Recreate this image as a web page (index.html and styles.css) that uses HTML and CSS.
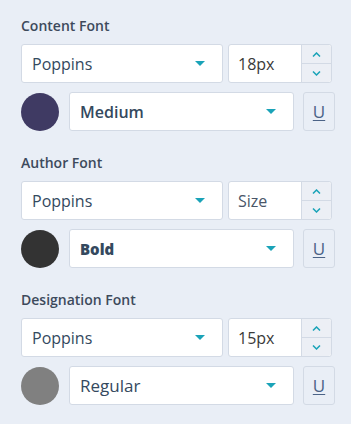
FILE: index.html
```html
<!DOCTYPE html>
<html>
<head>
  <title>Typography</title>
  <meta name="viewport" content="width=device-width, initial-scale=1.0">
  <link rel="stylesheet" href="styles.css">
</head>
<body>
  <div class="panel">
    <div class="font-group">
      <div class="group-label">Content Font</div>
      <div class="font-row">
        <div class="select family"><span>Poppins</span><i class="caret"></i></div>
        <div class="size-input">
          <span class="size-value">18px</span>
          <div class="spinner">
            <button class="spin up"><svg width="9" height="5" viewBox="0 0 9 5"><path d="M1 4.5 L4.5 1 L8 4.5" /></svg></button>
            <button class="spin down"><svg width="9" height="5" viewBox="0 0 9 5"><path d="M1 0.5 L4.5 4 L8 0.5" /></svg></button>
          </div>
        </div>
      </div>
      <div class="style-row">
        <span class="swatch" style="background-color: #3f3a63"></span>
        <div class="select weight medium"><span>Medium</span><i class="caret"></i></div>
        <button class="underline-btn">U</button>
      </div>
    </div>

    <div class="font-group">
      <div class="group-label">Author Font</div>
      <div class="font-row">
        <div class="select family"><span>Poppins</span><i class="caret"></i></div>
        <div class="size-input">
          <span class="size-value placeholder">Size</span>
          <div class="spinner">
            <button class="spin up"><svg width="9" height="5" viewBox="0 0 9 5"><path d="M1 4.5 L4.5 1 L8 4.5" /></svg></button>
            <button class="spin down"><svg width="9" height="5" viewBox="0 0 9 5"><path d="M1 0.5 L4.5 4 L8 0.5" /></svg></button>
          </div>
        </div>
      </div>
      <div class="style-row">
        <span class="swatch" style="background-color: #333333"></span>
        <div class="select weight bold"><span>Bold</span><i class="caret"></i></div>
        <button class="underline-btn">U</button>
      </div>
    </div>

    <div class="font-group">
      <div class="group-label">Designation Font</div>
      <div class="font-row">
        <div class="select family"><span>Poppins</span><i class="caret"></i></div>
        <div class="size-input">
          <span class="size-value">15px</span>
          <div class="spinner">
            <button class="spin up"><svg width="9" height="5" viewBox="0 0 9 5"><path d="M1 4.5 L4.5 1 L8 4.5" /></svg></button>
            <button class="spin down"><svg width="9" height="5" viewBox="0 0 9 5"><path d="M1 0.5 L4.5 4 L8 0.5" /></svg></button>
          </div>
        </div>
      </div>
      <div class="style-row">
        <span class="swatch" style="background-color: #808080"></span>
        <div class="select weight regular"><span>Regular</span><i class="caret"></i></div>
        <button class="underline-btn">U</button>
      </div>
    </div>
  </div>
</body>
</html>
```

FILE: styles.css
```css
body {
  margin: 0;
  background-color: #e9eef6;
  font-family: "Open Sans", sans-serif;
  color: #34495e;
}

.panel {
  padding: 18px 16px 0 21px;
}

.font-group {
  margin-bottom: 24px;
}

.group-label {
  font-size: 14px;
  line-height: 16px;
  font-weight: 600;
  color: #3d4a5c;
  margin-bottom: 10px;
}

.font-row,
.style-row {
  display: flex;
  align-items: center;
  height: 39px;
}

.font-row {
  gap: 5px;
  margin-bottom: 9px;
}

.style-row {
  gap: 10px;
}

.select {
  display: flex;
  align-items: center;
  justify-content: space-between;
  box-sizing: border-box;
  height: 39px;
  padding: 0 17px 0 10px;
  background-color: #fff;
  border: 1px solid #d3dae5;
  border-radius: 3px;
  font-size: 16px;
}

.select.family {
  width: 202px;
}

.select.weight {
  width: 225px;
  font-size: 17px;
}

.select.medium {
  font-size: 16px;
  font-weight: 600;
}

.select.bold {
  font-size: 15px;
  font-weight: 800;
}

.caret {
  width: 0;
  height: 0;
  border-left: 5px solid transparent;
  border-right: 5px solid transparent;
  border-top: 5px solid #1aa3b8;
}

.size-input {
  display: flex;
  box-sizing: border-box;
  width: 104px;
  height: 39px;
  background-color: #fff;
  border: 1px solid #d3dae5;
  border-radius: 3px;
}

.size-value {
  flex: 1;
  display: flex;
  align-items: center;
  padding-left: 9px;
  font-size: 16px;
  color: #3a3a3a;
}

.size-value.placeholder {
  color: #4a5668;
}

.spinner {
  display: flex;
  flex-direction: column;
  width: 29px;
  border-left: 1px solid #d3dae5;
  background-color: #eceff5;
  border-radius: 0 3px 3px 0;
}

.spin {
  flex: 1;
  display: flex;
  align-items: center;
  justify-content: center;
  padding: 0;
  border: none;
  background: transparent;
}

.spin.up {
  border-bottom: 1px solid #d3dae5;
}

.spin svg path {
  fill: none;
  stroke: #1aa3b8;
  stroke-width: 1.5;
}

.swatch {
  width: 38px;
  height: 38px;
  border-radius: 50%;
  flex-shrink: 0;
}

.select.weight + .underline-btn {
  margin-left: -1px;
}

.underline-btn {
  box-sizing: border-box;
  width: 32px;
  height: 39px;
  padding: 0;
  border: 1px solid #d3dae5;
  border-radius: 3px;
  background-color: #e9eef6;
  font-family: "Open Sans", sans-serif;
  font-size: 17px;
  color: #4b6387;
  text-decoration: underline;
  text-decoration-thickness: 1px;
  text-underline-offset: 2px;
}
```
